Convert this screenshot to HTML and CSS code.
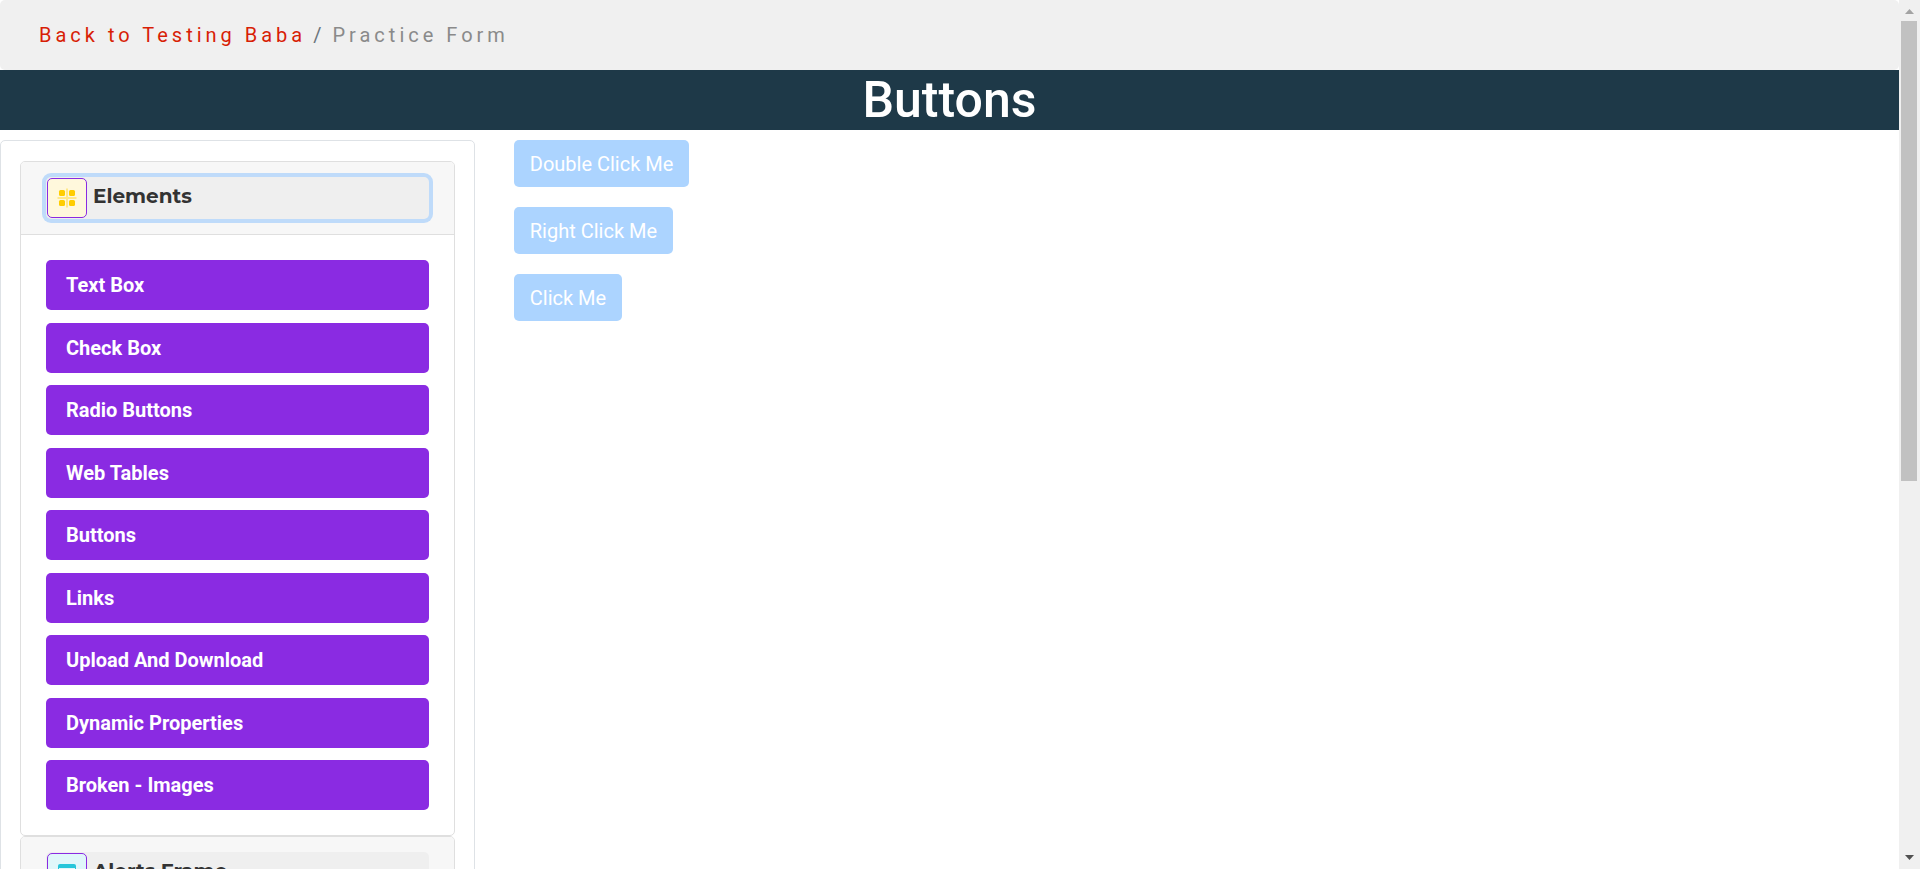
FILE: index.html
```html
<!DOCTYPE html>
<html lang="en">
<head>
<meta charset="utf-8">
<title>Buttons</title>
<link rel="stylesheet" href="styles.css">
</head>
<body>
<div class="window">
  <div class="page">
    <nav class="breadcrumb" aria-label="Breadcrumb">
      <a class="breadcrumb-link" href="#">Back to Testing Baba</a>
      <span class="breadcrumb-sep">/</span>
      <span class="breadcrumb-current">Practice Form</span>
    </nav>
    <h1 class="title">Buttons</h1>
    <div class="columns">
      <aside class="sidebar">
        <section class="card">
          <div class="card-header">
            <button class="toggle toggle-focus" type="button" aria-expanded="true">
              <span class="icon icon-yellow">
                <svg width="20" height="20" viewBox="0 0 20 20" aria-hidden="true">
                  <path d="M10 0.500v19M0.500 10h19" stroke="#ffe88a" stroke-width="2" fill="none"/>
                  <g fill="#ffcd00"><rect x="2" y="2" width="6" height="6" rx="1.500"/><rect x="12" y="2" width="6" height="6" rx="1.500"/><rect x="2" y="12" width="6" height="6" rx="1.500"/><rect x="12" y="12" width="6" height="6" rx="1.500"/></g>
                </svg>
              </span>
              <span class="toggle-text">Elements</span>
            </button>
          </div>
          <div class="card-body">
            <a class="item" href="#">Text Box</a>
            <a class="item" href="#">Check Box</a>
            <a class="item" href="#">Radio Buttons</a>
            <a class="item" href="#">Web Tables</a>
            <a class="item" href="#">Buttons</a>
            <a class="item" href="#">Links</a>
            <a class="item" href="#">Upload And Download</a>
            <a class="item" href="#">Dynamic Properties</a>
            <a class="item" href="#">Broken - Images</a>
          </div>
        </section>
        <section class="card">
          <div class="card-header">
            <button class="toggle" type="button" aria-expanded="false">
              <span class="icon icon-cyan">
                <svg width="20" height="20" viewBox="0 0 20 20" aria-hidden="true">
                  <path d="M3 1h14a2 2 0 0 1 2 2v2H1V3a2 2 0 0 1 2-2z" fill="#26c6da"/>
                  <path d="M1.500 5v12a1.500 1.500 0 0 0 1.500 1.500h14a1.500 1.500 0 0 0 1.500-1.500V5" fill="none" stroke="#26c6da"/>
                </svg>
              </span>
              <span class="toggle-text">Alerts Frame</span>
            </button>
          </div>
        </section>
      </aside>
      <main class="content">
        <button class="action" type="button">Double Click Me</button>
        <button class="action" type="button">Right Click Me</button>
        <button class="action" type="button">Click Me</button>
      </main>
    </div>
  </div>
  <div class="scrollbar" aria-hidden="true">
    <svg class="arrow" width="21" height="21" viewBox="0 0 21 21"><path d="M6 14h9L10.500 9z" fill="#a3a3a3"/></svg>
    <div class="track"><div class="thumb"></div></div>
    <svg class="arrow" width="21" height="21" viewBox="0 0 21 21"><path d="M6 7h9l-4.500 5z" fill="#505050"/></svg>
  </div>
</div>
</body>
</html>
```
FILE: styles.css
```css
* { box-sizing: border-box; }
body { margin: 0; background: #fff; font-family: Roboto, "Liberation Sans", sans-serif; font-size: 20px; line-height: 30px; }
.window { display: flex; height: 100vh; overflow: hidden; }
.page { flex: 1; min-width: 0; }
.breadcrumb { display: flex; gap: 7px; padding: 20px 39px; border-radius: 5px; background: #f0f0f0; letter-spacing: 4px; }
.breadcrumb-link { color: #d81e06; text-decoration: none; }
.breadcrumb-sep { color: #6c757d; }
.breadcrumb-current { color: #8a8a8a; }
.title { margin: 0; background: #1e3948; color: #fff; font-size: 50px; font-weight: 500; line-height: 60px; text-align: center; }
.columns { display: flex; padding-top: 10px; }
.sidebar { flex: 0 0 25%; padding: 20px 19px; border: 1px solid #dee2e6; border-radius: 5px; }
.card { border: 1px solid #dfdfdf; border-radius: 5px; overflow: hidden; }
.card-header { padding: 15px 25px; background: #f7f7f7; }
.card-body { display: flex; flex-direction: column; justify-content: space-between; min-height: 601px; padding: 25px; border-top: 1px solid #dfdfdf; }
.toggle { display: flex; align-items: center; gap: 6px; width: 100%; padding: 1px; border: 0; border-radius: 5px; background: #efefef; color: #333; text-align: left; }
.toggle-focus { box-shadow: 0 0 0 4px #bfdbfa; }
.toggle-text { padding-bottom: 4px; font: 700 20px/30px Montserrat, Inter, sans-serif; }
.icon { display: flex; align-items: center; justify-content: center; width: 40px; height: 40px; border: 1px solid #8a2be2; border-radius: 5px; }
.icon-yellow { background: #fff8dc; }
.icon-cyan { background: #e0f7fa; }
.item { padding: 10px 20px; border-radius: 5px; background: #8a2be2; color: #fff; font-weight: 700; text-decoration: none; }
.content { display: flex; flex: 1; flex-direction: column; align-items: flex-start; gap: 20px; padding: 0 39px; }
.action { padding: 9px 16px 8px; border: 0; border-radius: 5px; background: #acd4ff; color: #fff; font: inherit; }
.scrollbar { display: flex; flex: 0 0 21px; flex-direction: column; background: #f0f0f0; }
.arrow { display: block; }
.track { flex: 1; padding: 0 3px 0 2px; }
.thumb { height: 460px; background: #c1c1c1; }
```
